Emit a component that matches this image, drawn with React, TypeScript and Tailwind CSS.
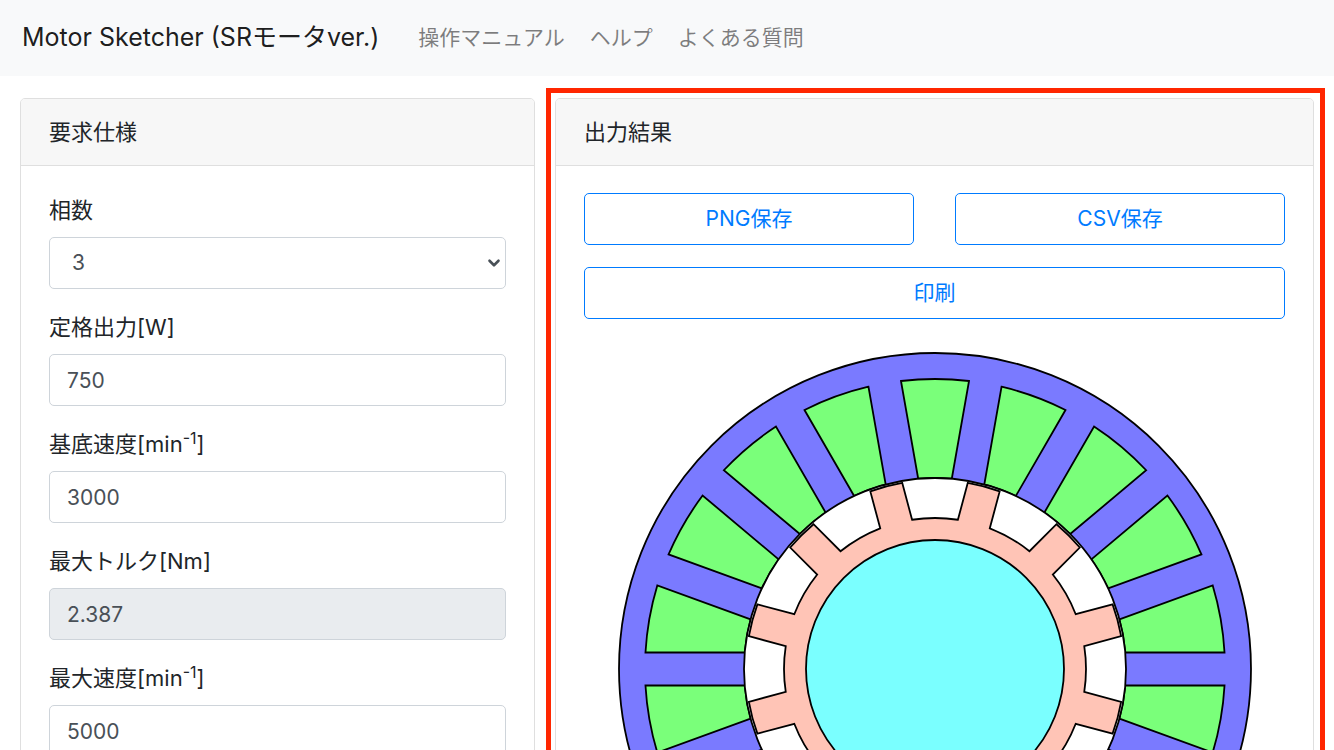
import React, { useState } from 'react';
import { ChevronDown } from 'lucide-react';
import { clsx } from 'clsx';

const NAV_LINKS = [
  { id: 'manual', label: '操作マニュアル' },
  { id: 'help', label: 'ヘルプ' },
  { id: 'faq', label: 'よくある質問' },
];

const PER_MINUTE = (
  <>
    [min<sup className="text-base">-1</sup>]
  </>
);

const FIELDS = [
  { id: 'power', name: '定格出力', unit: '[W]', value: '750', readOnly: false },
  { id: 'base-speed', name: '基底速度', unit: PER_MINUTE, value: '3000', readOnly: false },
  { id: 'torque', name: '最大トルク', unit: '[Nm]', value: '2.387', readOnly: true },
  { id: 'max-speed', name: '最大速度', unit: PER_MINUTE, value: '5000', readOnly: false },
];

const STATOR_SLOTS = 18;
const ROTOR_POLES = 12;

// radii and half widths of the motor cross section
const MOTOR = {
  statorOuter: 316,
  slotOuter: 290,
  bore: 191,
  rotorOuter: 189,
  rotorBase: 151,
  shaft: 129,
  halfTooth: 16.5,
};

// point on radius r, at a distance `offset` beside the ray with the given angle
function besideRay(r: number, degrees: number, offset: number) {
  const a = (degrees * Math.PI) / 180 + Math.asin(offset / r);
  return `${(r * Math.cos(a)).toFixed(2)} ${(r * Math.sin(a)).toFixed(2)}`;
}

function slotPath(index: number) {
  const step = 360 / STATOR_SLOTS;
  const from = index * step;
  const to = from + step;
  const { slotOuter, bore, halfTooth } = MOTOR;
  return [
    `M${besideRay(bore, from, halfTooth)}`,
    `L${besideRay(slotOuter, from, halfTooth)}`,
    `A${slotOuter} ${slotOuter} 0 0 1 ${besideRay(slotOuter, to, -halfTooth)}`,
    `L${besideRay(bore, to, -halfTooth)}`,
    `A${bore} ${bore} 0 0 0 ${besideRay(bore, from, halfTooth)}Z`,
  ].join('');
}

function rotorPath() {
  const step = 360 / ROTOR_POLES;
  const { rotorOuter, rotorBase, halfTooth } = MOTOR;
  const parts: string[] = [];
  for (let i = 0; i < ROTOR_POLES; i++) {
    const angle = step / 2 + i * step;
    parts.push(
      `${i === 0 ? 'M' : 'L'}${besideRay(rotorBase, angle, -halfTooth)}`,
      `L${besideRay(rotorOuter, angle, -halfTooth)}`,
      `A${rotorOuter} ${rotorOuter} 0 0 1 ${besideRay(rotorOuter, angle, halfTooth)}`,
      `L${besideRay(rotorBase, angle, halfTooth)}`,
      `A${rotorBase} ${rotorBase} 0 0 1 ${besideRay(rotorBase, angle + step, -halfTooth)}`
    );
  }
  return parts.join('') + 'Z';
}

function MotorDrawing() {
  return (
    <svg
      viewBox="-320 -320 640 640"
      className="mx-auto mt-[30px] block w-[640px] max-w-full"
      stroke="#000"
      strokeWidth={1.8}
      role="img"
      aria-label="モータ断面図"
    >
      <circle r={MOTOR.statorOuter} fill="#7a7aff" />
      {Array.from({ length: STATOR_SLOTS }, (_, i) => (
        <path key={`slot-${i}`} d={slotPath(i)} fill="#7aff7a" />
      ))}
      <circle r={MOTOR.bore} fill="#fff" />
      <path d={rotorPath()} fill="#ffc4b6" />
      <circle r={MOTOR.shaft} fill="#7affff" />
    </svg>
  );
}

function Card({ title, children }: { title: string; children: React.ReactNode }) {
  return (
    <section className="h-full rounded-[5px] border border-[#dfdfdf] bg-white">
      <h2 className="rounded-t-[4px] border-b border-[#dfdfdf] bg-[#f7f7f7] px-[28px] py-[17px] text-[22px] leading-8">
        {title}
      </h2>
      <div className="px-[28px] pt-[27px] pb-[28px]">{children}</div>
    </section>
  );
}

function OutlineButton({ children, className }: { children: React.ReactNode; className?: string }) {
  return (
    <button
      type="button"
      className={clsx(
        'h-[52px] cursor-pointer rounded-[5px] border border-[#007bff] text-[#007bff] hover:bg-[#007bff] hover:text-white',
        className
      )}
    >
      {children}
    </button>
  );
}

const labelClass = 'mb-[10px] block text-[22px] leading-[34px]';

const controlClass =
  'block h-[52px] w-full rounded-[5px] border border-[#ced4da] px-[17px] text-[#495057] outline-none focus:border-[#80bdff]';

export default function App() {
  const [phases, setPhases] = useState('3');
  const [values, setValues] = useState<Record<string, string>>(
    Object.fromEntries(FIELDS.map((f) => [f.id, f.value]))
  );

  return (
    <div className="min-h-screen bg-white font-['Inter','Noto_Sans_CJK_JP',sans-serif] text-[21px] text-[#212529]">
      <nav className="flex h-[76px] items-center bg-[#f8f9fa] px-[22px]">
        <a href="#top" className="mr-[39px] text-[25px] text-black/90">
          Motor Sketcher (SRモータver.)
        </a>
        <ul className="flex gap-[25px]">
          {NAV_LINKS.map((link) => (
            <li key={link.id}>
              <a href={`#${link.id}`} className="text-black/50 hover:text-black/70">
                {link.label}
              </a>
            </li>
          ))}
        </ul>
      </nav>

      <main className="grid grid-cols-[199fr_301fr] gap-[11px] pt-[12px] pr-[9px] pb-[22px] pl-[20px]">
        <div className="py-[10px]">
          <Card title="要求仕様">
            <form className="space-y-[21px]">
              <div>
                <label htmlFor="phases" className={labelClass}>
                  相数
                </label>
                <div className="relative">
                  <select
                    id="phases"
                    value={phases}
                    onChange={(e) => setPhases(e.target.value)}
                    className={clsx(controlClass, 'appearance-none bg-white pl-[22px]')}
                  >
                    <option>3</option>
                    <option>4</option>
                    <option>5</option>
                  </select>
                  <ChevronDown
                    size={18}
                    strokeWidth={3.5}
                    className="pointer-events-none absolute top-[17px] right-[3px] text-[#495057]"
                  />
                </div>
              </div>

              {FIELDS.map((field) => (
                <div key={field.id}>
                  <label htmlFor={field.id} className={labelClass}>
                    {field.name}
                    {field.unit}
                  </label>
                  <input
                    id={field.id}
                    type="text"
                    value={values[field.id]}
                    readOnly={field.readOnly}
                    onChange={(e) => setValues({ ...values, [field.id]: e.target.value })}
                    className={clsx(controlClass, field.readOnly ? 'bg-[#e9ecef]' : 'bg-white')}
                  />
                </div>
              ))}
            </form>
          </Card>
        </div>

        {/* highlighted result panel */}
        <div className="border-[5px] border-[#ff2600] pt-[5px] pr-[6px] pb-[5px] pl-[4px]">
          <Card title="出力結果">
            <div className="grid grid-cols-2 gap-x-[41px] gap-y-[22px]">
              <OutlineButton>PNG保存</OutlineButton>
              <OutlineButton>CSV保存</OutlineButton>
              <OutlineButton className="col-span-2">印刷</OutlineButton>
            </div>
            <MotorDrawing />
          </Card>
        </div>
      </main>
    </div>
  );
}
